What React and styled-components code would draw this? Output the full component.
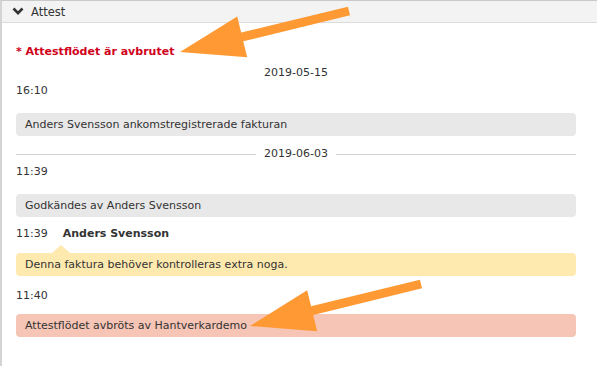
import styled, { createGlobalStyle } from 'styled-components'

const Global = createGlobalStyle`
  body { margin: 0; background: #fff; font-family: "DejaVu Sans", Verdana, sans-serif; color: #333; }
`

const entries = [
  { date: '2019-05-15', lined: false, time: '16:10', text: 'Anders Svensson ankomstregistrerade fakturan', tone: 'gray' },
  { date: '2019-06-03', lined: true, time: '11:39', text: 'Godkändes av Anders Svensson', tone: 'gray' },
  { time: '11:39', author: 'Anders Svensson', text: 'Denna faktura behöver kontrolleras extra noga.', tone: 'note' },
  { time: '11:40', text: 'Attestflödet avbröts av Hantverkardemo', tone: 'stop' }
]

// bg colour, space above the time row (when no date), space above the bubble
const tones = {
  gray: { bg: '#e8e8e8', above: 9, gap: 14 },
  note: { bg: '#fee9af', above: 9, gap: 11 },
  stop: { bg: '#f6c5b5', above: 12, gap: 10 }
}

export default function App() {
  return <Page>
    <Global />
    <Panel>
      <Header>
        <svg width='12' height='9' viewBox='0 0 12 9'>
          <polyline points='1.5,1.5 6,6.2 10.5,1.5' fill='none' stroke='#333' strokeWidth='2.6' />
        </svg>
        <span>Attest</span>
      </Header>
      <Body>
        <Status>* Attestflödet är avbrutet</Status>
        {entries.map((e, i) => <Entry key={i}>
          {e.date && <DateLine lined={e.lined} first={i === 0}><span>{e.date}</span></DateLine>}
          <TimeRow space={e.date ? 2 : tones[e.tone].above}>
            <span>{e.time}</span>
            {e.author && <Author>{e.author}</Author>}
          </TimeRow>
          <Bubble tone={e.tone}>{e.text}</Bubble>
        </Entry>)}
      </Body>
    </Panel>
    <Arrows width='597' height='366' viewBox='0 0 597 366'>
      <Arrow x1={349} y1={11} x2={180} y2={52} />
      <Arrow x1={421} y1={284} x2={250} y2={326} />
    </Arrows>
  </Page>
}

function Arrow({ x1, y1, x2, y2 }) {
  const dx = x2 - x1, dy = y2 - y1
  const len = Math.hypot(dx, dy)
  const ux = dx / len, uy = dy / len
  const px = -uy, py = ux
  const head = 64, hw = 21, sw = 4.5
  const bx = x2 - ux * head, by = y2 - uy * head
  const pts = [
    [x1 + px * sw, y1 + py * sw],
    [bx + px * sw, by + py * sw],
    [bx + px * hw, by + py * hw],
    [x2, y2],
    [bx - px * hw, by - py * hw],
    [bx - px * sw, by - py * sw],
    [x1 - px * sw, y1 - py * sw]
  ].map(p => p.join(',')).join(' ')
  return <polygon points={pts} fill='#ff9933' />
}

const Page = styled.div`
  position: relative;
  width: 597px;
  height: 366px;
  overflow: hidden;
`

const Panel = styled.section`
  height: 100%;
  border-top: 1px solid #c9c9c9;
  border-left: 2px solid #d4d4d4;
  box-sizing: border-box;
`

const Header = styled.div`
  display: flex;
  align-items: center;
  gap: 7px;
  height: 21px;
  padding-left: 10px;
  background: #f3f3f3;
  border-bottom: 1px solid #dcdcdc;
  font-size: 11.5px;
  svg { display: block; }
`

const Body = styled.div`
  padding: 21px 21px 0 14px;
  font-size: 11px;
  line-height: 16px;
`

const Status = styled.div`
  color: #d0021b;
  font-weight: bold;
  font-size: 11px;
  margin-bottom: 5px;
`

const Entry = styled.div`
  display: flex;
  flex-direction: column;
`

const DateLine = styled.div`
  display: flex;
  align-items: center;
  gap: 8px;
  margin-top: ${p => p.first ? 0 : 10}px;
  &::before, &::after {
    content: '';
    flex: 1;
    height: 1px;
    background: ${p => p.lined ? '#d3d3d3' : 'transparent'};
  }
`

const TimeRow = styled.div`
  display: flex;
  gap: 15px;
  margin-top: ${p => p.space}px;
`

const Author = styled.span`
  font-weight: bold;
`

const Bubble = styled.div`
  position: relative;
  margin-top: ${p => tones[p.tone].gap}px;
  padding: 4px 9px 3px;
  border-radius: 4px;
  background: ${p => tones[p.tone].bg};
  ${p => p.tone === 'note' && `
    &::before {
      content: '';
      position: absolute;
      left: 36px;
      top: -8px;
      border-left: 9px solid transparent;
      border-right: 9px solid transparent;
      border-bottom: 8px solid ${tones.note.bg};
    }
  `}
`

const Arrows = styled.svg`
  position: absolute;
  left: 0;
  top: 0;
  pointer-events: none;
`
